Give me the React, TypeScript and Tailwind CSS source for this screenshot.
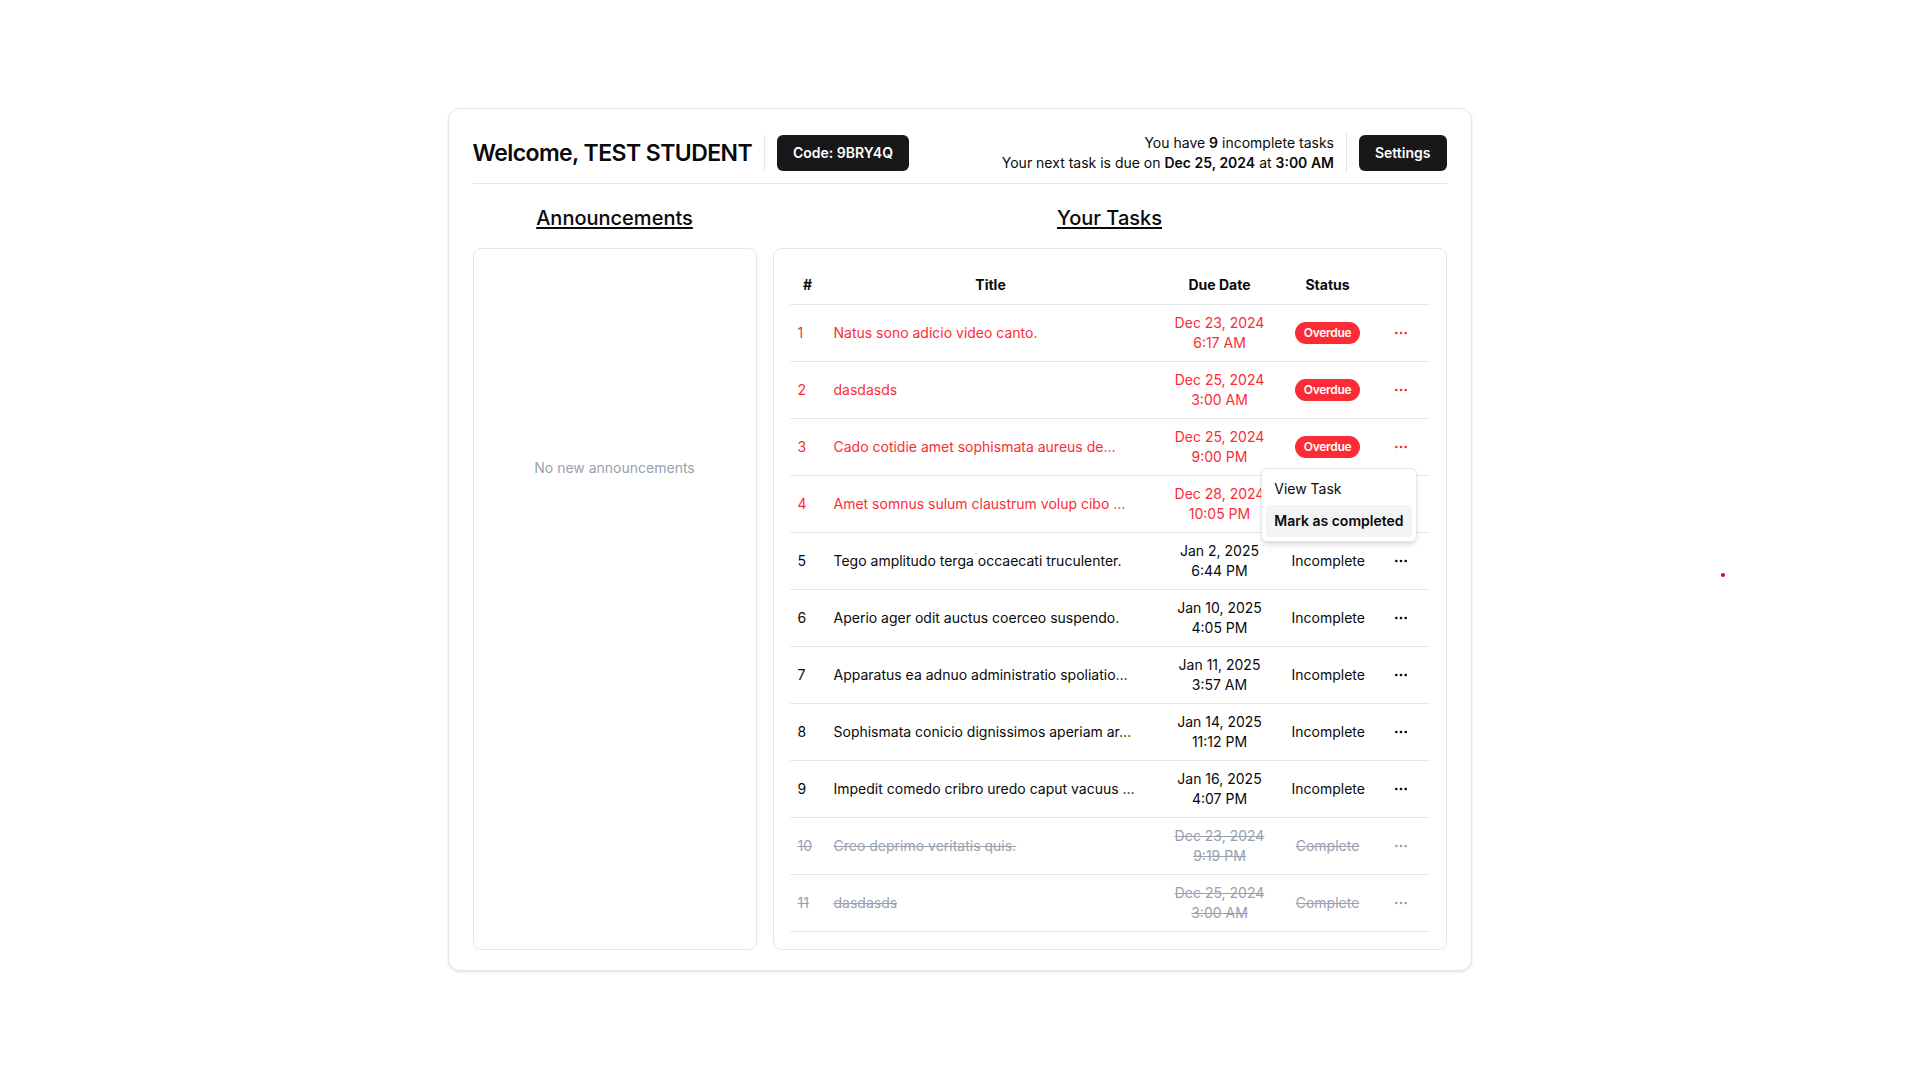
import { Ellipsis } from "lucide-react";

type Status = "overdue" | "incomplete" | "complete";

interface Task {
  id: number;
  title: string;
  date: string;
  time: string;
  status: Status;
}

const tasks: Task[] = [
  { id: 1, title: "Natus sono adicio video canto.", date: "Dec 23, 2024", time: "6:17 AM", status: "overdue" },
  { id: 2, title: "dasdasds", date: "Dec 25, 2024", time: "3:00 AM", status: "overdue" },
  { id: 3, title: "Cado cotidie amet sophismata aureus de…", date: "Dec 25, 2024", time: "9:00 PM", status: "overdue" },
  { id: 4, title: "Amet somnus sulum claustrum volup cibo …", date: "Dec 28, 2024", time: "10:05 PM", status: "overdue" },
  { id: 5, title: "Tego amplitudo terga occaecati truculenter.", date: "Jan 2, 2025", time: "6:44 PM", status: "incomplete" },
  { id: 6, title: "Aperio ager odit auctus coerceo suspendo.", date: "Jan 10, 2025", time: "4:05 PM", status: "incomplete" },
  { id: 7, title: "Apparatus ea adnuo administratio spoliatio…", date: "Jan 11, 2025", time: "3:57 AM", status: "incomplete" },
  { id: 8, title: "Sophismata conicio dignissimos aperiam ar…", date: "Jan 14, 2025", time: "11:12 PM", status: "incomplete" },
  { id: 9, title: "Impedit comedo cribro uredo caput vacuus …", date: "Jan 16, 2025", time: "4:07 PM", status: "incomplete" },
  { id: 10, title: "Creo deprimo veritatis quis.", date: "Dec 23, 2024", time: "9:19 PM", status: "complete" },
  { id: 11, title: "dasdasds", date: "Dec 25, 2024", time: "3:00 AM", status: "complete" },
];

// row with the actions menu open
const openMenuId = 3;

function TaskRow({ task }: { task: Task }) {
  const tone =
    task.status === "overdue"
      ? "text-red-500"
      : task.status === "complete"
        ? "text-gray-400 line-through"
        : "text-[#0a0a0a]";

  return (
    <tr className={`border-b border-gray-200 text-sm ${tone}`}>
      <td className="px-2 py-2">{task.id}</td>
      <td className="px-2 py-2">
        <div className="whitespace-nowrap">{task.title}</div>
      </td>
      <td className="px-2 py-2 text-center leading-5">
        <div>{task.date}</div>
        <div>{task.time}</div>
      </td>
      <td className="px-2 py-2 text-center">
        {task.status === "overdue" ? (
          <span className="inline-flex items-center rounded-full border border-transparent bg-red-500 px-2 py-0.5 text-xs font-semibold tracking-tight text-white no-underline">
            Overdue
          </span>
        ) : task.status === "complete" ? (
          "Complete"
        ) : (
          "Incomplete"
        )}
      </td>
      <td className="px-2 py-2">
        <div className="relative mx-auto h-8 w-8">
          <button className="flex h-8 w-8 items-center justify-center rounded-md">
            <Ellipsis size={16} />
          </button>
          {task.id === openMenuId && (
            <div className="absolute right-0 top-full z-10 mt-[5px] w-max rounded-md border border-gray-200 bg-white p-1 text-sm text-[#0a0a0a] shadow-md no-underline">
              <div className="rounded-sm px-2 py-1.5">View Task</div>
              <div className="rounded-sm bg-gray-100 px-2 py-1.5 font-semibold">Mark as completed</div>
            </div>
          )}
        </div>
      </td>
    </tr>
  );
}

export default function App() {
  return (
    <div
      className="relative flex min-h-screen items-center justify-center bg-white text-[#0a0a0a]"
      style={{ fontFamily: "Inter, 'Noto Sans', sans-serif" }}
    >
      <div className="w-[1024px] rounded-xl border border-gray-200 bg-white p-6 pb-5 shadow">
        {/* header */}
        <div className="flex items-center justify-between border-b border-gray-200 pb-2.5">
          <div className="flex items-center gap-3">
            <h1 className="text-[23px] font-semibold tracking-tight">Welcome, TEST STUDENT</h1>
            <div className="h-9 w-px bg-gray-200" />
            <button className="h-9 rounded-md bg-[#18181b] px-4 text-sm font-semibold text-white">
              Code: 9BRY4Q
            </button>
          </div>
          <div className="flex items-center gap-3">
            <div className="text-right text-sm leading-5">
              <div>
                You have <span className="font-semibold">9</span> incomplete tasks
              </div>
              <div>
                Your next task is due on <span className="font-semibold">Dec 25, 2024</span> at{" "}
                <span className="font-semibold">3:00 AM</span>
              </div>
            </div>
            <div className="h-10 w-px bg-gray-200" />
            <button className="h-9 rounded-md bg-[#18181b] px-4 text-sm font-semibold text-white">
              Settings
            </button>
          </div>
        </div>

        {/* body */}
        <div className="mt-5 grid grid-cols-[284px_1fr] gap-x-4 gap-y-4">
          <h2 className="text-center text-xl font-medium underline underline-offset-2">Announcements</h2>
          <h2 className="text-center text-xl font-medium underline underline-offset-2">Your Tasks</h2>

          <div className="rounded-lg border border-gray-200 pt-[209px] text-center text-sm text-gray-400">
            No new announcements
          </div>

          <div className="rounded-lg border border-gray-200 p-4 pb-[17px]">
            <table className="w-full table-fixed border-collapse">
              <colgroup>
                <col className="w-[36px]" />
                <col />
                <col className="w-[128px]" />
                <col className="w-[88px]" />
                <col className="w-[58px]" />
              </colgroup>
              <thead>
                <tr className="h-10 border-b border-gray-200 text-sm font-semibold">
                  <th className="px-2 text-center">#</th>
                  <th className="px-2 text-center">Title</th>
                  <th className="px-2 text-center">Due Date</th>
                  <th className="px-2 text-center">Status</th>
                  <th className="px-2" />
                </tr>
              </thead>
              <tbody>
                {tasks.map((t) => (
                  <TaskRow key={t.id} task={t} />
                ))}
              </tbody>
            </table>
          </div>
        </div>
      </div>

      <div className="absolute left-[1721px] top-[573px] h-1 w-1 rounded-full bg-red-600" />
    </div>
  );
}
